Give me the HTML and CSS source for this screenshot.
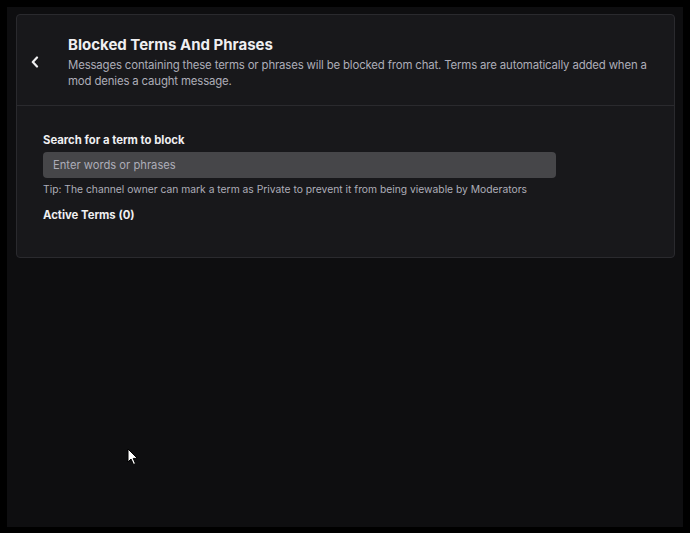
FILE: index.html
```html
<!DOCTYPE html>
<html lang="en">
<head>
    <meta charset="UTF-8">
    <meta name="viewport" content="width=device-width, initial-scale=1.0">
    <title>Blocked Terms And Phrases</title>
    <link rel="stylesheet" href="styles.css">
</head>
<body>
    <div class="screen">
        <div class="card">
            <div class="card-header">
                <button class="back" aria-label="Back">
                    <svg width="10" height="12" viewBox="0 0 10 12"><path d="M7 1.5 L2.8 6 L7 10.5" fill="none" stroke="#efeff1" stroke-width="2.2" stroke-linecap="round" stroke-linejoin="round"/></svg>
                </button>
                <div class="heading">
                    <h1>Blocked Terms And Phrases</h1>
                    <p>Messages containing these terms or phrases will be blocked from chat. Terms are automatically added when a mod denies a caught message.</p>
                </div>
            </div>
            <div class="card-body">
                <label class="label" for="term">Search for a term to block</label>
                <input id="term" class="search" type="text" placeholder="Enter words or phrases">
                <div class="tip">Tip: The channel owner can mark a term as Private to prevent it from being viewable by Moderators</div>
                <div class="active">Active Terms (0)</div>
            </div>
        </div>

        <svg class="cursor" width="12" height="18" viewBox="0 0 12 18"><path d="M1 1 L1 14 L4 11 L6.5 16.5 L8.5 15.6 L6.2 10.4 L10.4 10.4 Z" fill="#fff" stroke="#000" stroke-width="1"/></svg>
    </div>
</body>
</html>
```

FILE: styles.css
```css
body {
    margin: 0;
    background-color: #000;
    font-family: Inter, "Noto Sans", sans-serif;
    color: #efeff1;
}

.screen {
    position: relative;
    margin: 7px 7px 6px 7px;
    height: 520px;
    background-color: #0e0e10;
    padding: 7px 8px 0 9px;
    box-sizing: border-box;
}

.card {
    background-color: #18181b;
    border: 1px solid #2a2a2e;
    border-radius: 4px;
}

.card-header {
    display: flex;
    align-items: center;
    gap: 18px;
    padding: 20px 16px 16px 3px;
    border-bottom: 1px solid #2a2a2e;
}

.back {
    width: 30px;
    height: 30px;
    flex: none;
    display: flex;
    align-items: center;
    justify-content: center;
    background: none;
    border: none;
    padding: 0;
    cursor: pointer;
}

.heading h1 {
    margin: 0;
    font-size: 15px;
    line-height: 20px;
    font-weight: 700;
    color: #efeff1;
}

.heading p {
    margin: 2px 0 0;
    font-size: 11.4px;
    letter-spacing: -0.15px;
    line-height: 16px;
    color: #adadb8;
}

.card-body {
    padding: 26px 26px 34px;
}

.label {
    display: block;
    font-size: 11.3px;
    line-height: 16px;
    font-weight: 700;
    color: #efeff1;
}

.search {
    display: block;
    width: 513px;
    height: 26px;
    margin-top: 4px;
    box-sizing: border-box;
    padding: 0 10px;
    border: none;
    border-radius: 4px;
    background-color: #464649;
    font-family: inherit;
    font-size: 11.2px;
    color: #efeff1;
}

.search::placeholder {
    color: #adadb8;
}

.tip {
    margin-top: 4px;
    font-size: 10.3px;
    line-height: 14px;
    color: #adadb8;
}

.active {
    margin-top: 11px;
    font-size: 11.3px;
    line-height: 16px;
    font-weight: 700;
    color: #efeff1;
}

.cursor {
    position: absolute;
    left: 120px;
    top: 441px;
}
```
